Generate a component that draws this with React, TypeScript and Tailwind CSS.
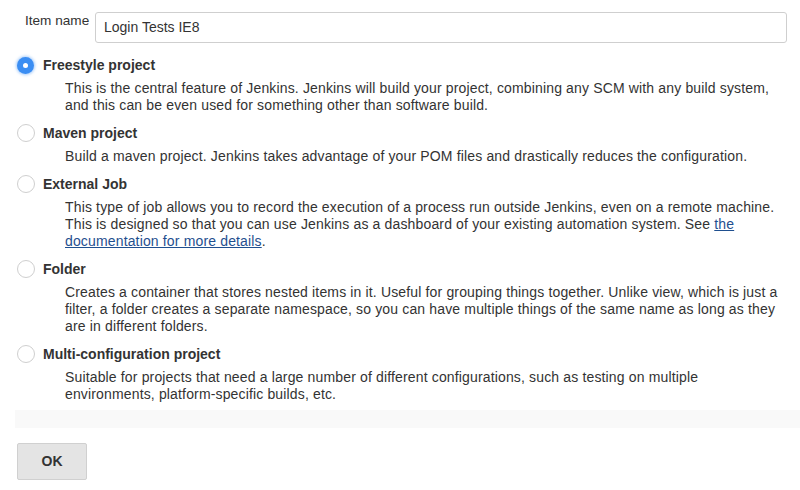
import React from 'react';

type Item = {
  name: string;
  lines: React.ReactNode[];
};

const link = 'text-[#1f4f8f] underline';

const items: Item[] = [
  {
    name: 'Freestyle project',
    lines: [
      'This is the central feature of Jenkins. Jenkins will build your project, combining any SCM with any build system,',
      'and this can be even used for something other than software build.',
    ],
  },
  {
    name: 'Maven project',
    lines: ['Build a maven project. Jenkins takes advantage of your POM files and drastically reduces the configuration.'],
  },
  {
    name: 'External Job',
    lines: [
      'This type of job allows you to record the execution of a process run outside Jenkins, even on a remote machine.',
      <>
        This is designed so that you can use Jenkins as a dashboard of your existing automation system. See{' '}
        <a href="#" className={link}>
          the
        </a>
      </>,
      <>
        <a href="#" className={link}>
          documentation for more details
        </a>
        .
      </>,
    ],
  },
  {
    name: 'Folder',
    lines: [
      'Creates a container that stores nested items in it. Useful for grouping things together. Unlike view, which is just a',
      'filter, a folder creates a separate namespace, so you can have multiple things of the same name as long as they',
      'are in different folders.',
    ],
  },
  {
    name: 'Multi-configuration project',
    lines: [
      'Suitable for projects that need a large number of different configurations, such as testing on multiple',
      'environments, platform-specific builds, etc.',
    ],
  },
];

function Radio({ checked }: { checked: boolean }) {
  if (checked) {
    return (
      <span className="flex h-[17px] w-[17px] items-center justify-center rounded-full bg-[#3b8ef3] shadow-[0_0_3px_1px_rgba(59,142,243,0.45)]">
        <span className="h-[5px] w-[5px] rounded-full bg-white" />
      </span>
    );
  }
  return <span className="h-[18px] w-[18px] rounded-full border border-[#cfcfcf] bg-white" />;
}

export default function App() {
  return (
    <div className="relative h-[490px] w-[800px] overflow-hidden bg-white font-['Liberation_Sans',Arial,sans-serif] text-[14px] text-[#333]">
      <div className="flex items-start pl-[25px] pr-[13px] pt-[12px]">
        <label className="mt-[1px] w-[70px] shrink-0 text-[13.6px] leading-[16px]">Item name</label>
        <div className="flex h-[31px] flex-1 items-center rounded-[3px] border border-[#cfcfcf] bg-white px-[8px] text-[14px]">
          Login Tests IE8
        </div>
      </div>

      <div className="mt-[12px] flex flex-col gap-[9px] pl-[16px]">
        {items.map((item, i) => (
          <div key={item.name}>
            <div className="flex h-[20px] items-center">
              <div className="flex w-[27px] justify-center pr-[8px]">
                <Radio checked={i === 0} />
              </div>
              <span className="font-bold">{item.name}</span>
            </div>
            <div className="mt-[5px] pl-[49px] leading-[17px] tracking-[0.15px]">
              {item.lines.map((line, j) => (
                <div key={j} className="whitespace-nowrap">
                  {line}
                </div>
              ))}
            </div>
          </div>
        ))}
      </div>

      <div className="ml-[15px] mt-[7px] h-[18px] bg-[#f9f9f9]" />

      <div className="pl-[17px] pt-[15px]">
        <button className="flex h-[37px] w-[70px] items-center justify-center rounded-[2px] border border-[#d0d0d0] bg-[#e4e4e4] text-[14px] font-bold text-[#333]">
          OK
        </button>
      </div>
    </div>
  );
}
